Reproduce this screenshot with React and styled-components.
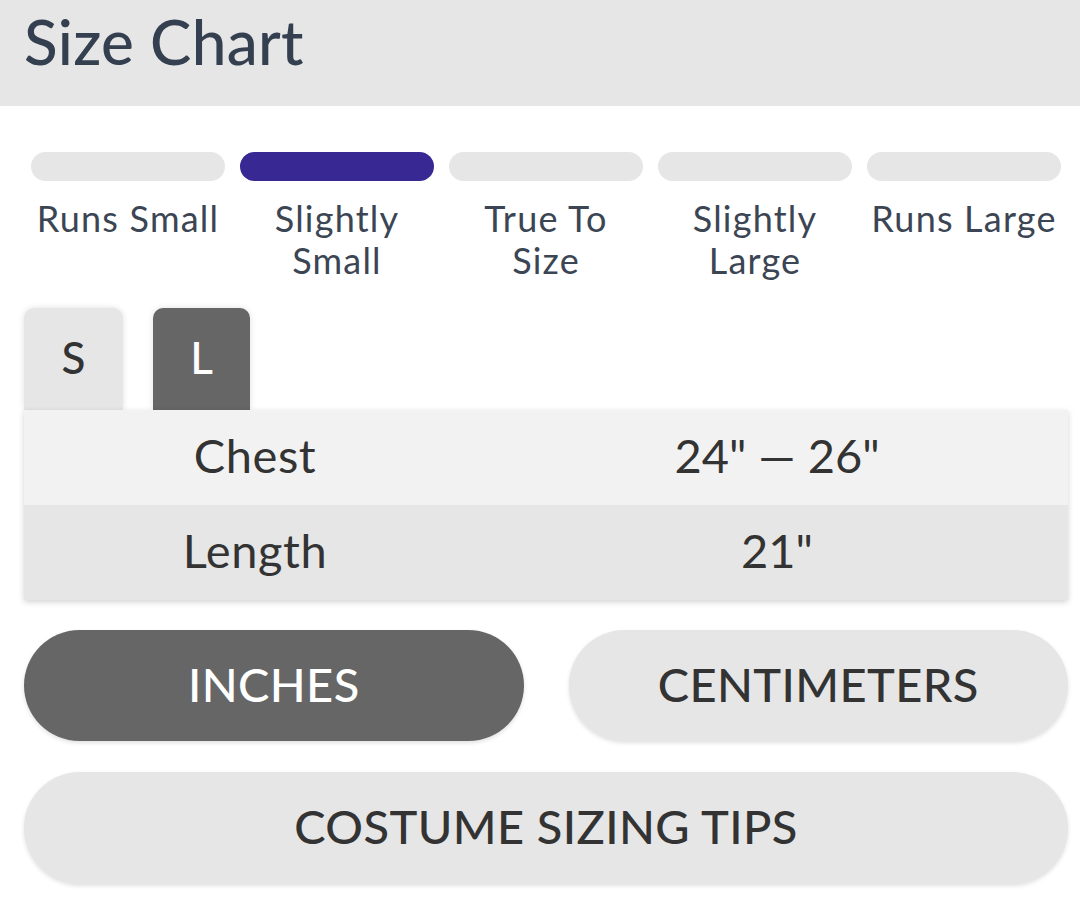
import React, { useState } from 'react';
import styled, { createGlobalStyle } from 'styled-components';

const GlobalStyle = createGlobalStyle`
  html, body {
    margin: 0;
    padding: 0;
    background: #ffffff;
    font-family: Lato, "Open Sans", sans-serif;
  }
`;

const FIT_SCALE = ['Runs Small', 'Slightly Small', 'True To Size', 'Slightly Large', 'Runs Large'];

const SIZES = {
  S: [
    { label: 'Chest', value: '20" — 22"' },
    { label: 'Length', value: '19"' },
  ],
  L: [
    { label: 'Chest', value: '24" — 26"' },
    { label: 'Length', value: '21"' },
  ],
};

const Page = styled.div`
  width: 1080px;
  height: 903px;
  overflow: hidden;
  background: #fff;
`;

const Header = styled.header`
  height: 106px;
  background: #e6e6e6;
  display: flex;
  align-items: center;
  padding: 0 24px;
  box-sizing: border-box;
`;

const Title = styled.h1`
  margin: 0 0 24px;
  font-size: 62px;
  font-weight: 500;
  color: #344050;
  letter-spacing: 0.3px;
`;

const Body = styled.div`
  padding: 46px 24px 0;
`;

const FitScale = styled.div`
  display: grid;
  grid-template-columns: repeat(5, 194px);
  gap: 15px;
  margin-left: 7px;
`;

const FitItem = styled.div`
  display: flex;
  flex-direction: column;
  align-items: center;
  gap: 16px;
`;

const FitBar = styled.div`
  width: 100%;
  height: 29px;
  border-radius: 15px;
  background: ${p => (p.$active ? '#382894' : '#e6e6e6')};
`;

const FitLabel = styled.div`
  font-size: 36px;
  line-height: 42px;
  letter-spacing: 1.2px;
  color: #3b4553;
  text-align: center;
  width: 100%;
`;

const Tabs = styled.div`
  display: flex;
  gap: 30px;
  margin-top: 27px;
`;

const Tab = styled.button`
  width: ${p => (p.$active ? '97px' : '99px')};
  height: 102px;
  border: none;
  border-radius: 10px 10px 0 0;
  background: ${p => (p.$active ? '#666666' : '#e6e6e6')};
  color: ${p => (p.$active ? '#ffffff' : '#333333')};
  font-family: Lato, sans-serif;
  font-size: 44px;
  font-weight: 500;
  box-shadow: 0 0 6px rgba(0, 0, 0, 0.12);
  padding: 0 0 4px;
  cursor: pointer;
`;

const Table = styled.div`
  width: 1044px;
  box-shadow: 0 2px 6px rgba(0, 0, 0, 0.18);
  position: relative;
`;

const Row = styled.div`
  display: grid;
  grid-template-columns: 462px 1fr;
  height: 95px;
  align-items: center;
  background: ${p => (p.$alt ? '#e6e6e6' : '#f2f2f2')};
`;

const Cell = styled.div`
  text-align: center;
  font-size: 47px;
  letter-spacing: 0.6px;
  color: #333;
  padding-bottom: 6px;
`;

const ValueCell = styled(Cell)`
  letter-spacing: 0;
`;

const UnitRow = styled.div`
  display: grid;
  grid-template-columns: 1fr 1fr;
  gap: 45px;
  margin-top: 30px;
  width: 1044px;
`;

const PillButton = styled.button`
  height: 111px;
  border: none;
  border-radius: 56px;
  background: ${p => (p.$active ? '#666666' : '#e6e6e6')};
  color: ${p => (p.$active ? '#ffffff' : '#333333')};
  font-family: Lato, sans-serif;
  font-size: 47px;
  font-weight: 500;
  text-transform: uppercase;
  letter-spacing: 0.4px;
  box-shadow: 0 2px 4px rgba(0, 0, 0, 0.12);
  cursor: pointer;
  width: 100%;
  padding: 0 0 4px;
`;

const TipsButton = styled(PillButton)`
  width: 1044px;
  margin-top: 31px;
  height: 112px;
`;

const App = () => {
  const [size, setSize] = useState('L');
  const [unit, setUnit] = useState('in');

  return (
    <Page>
      <GlobalStyle />
      <Header>
        <Title>Size Chart</Title>
      </Header>
      <Body>
        <FitScale>
          {FIT_SCALE.map((label, i) => (
            <FitItem key={label}>
              <FitBar $active={i === 1} />
              <FitLabel>{label}</FitLabel>
            </FitItem>
          ))}
        </FitScale>

        <Tabs>
          {Object.keys(SIZES).map(s => (
            <Tab key={s} $active={s === size} onClick={() => setSize(s)}>
              {s}
            </Tab>
          ))}
        </Tabs>
        <Table>
          {SIZES[size].map((row, i) => (
            <Row key={row.label} $alt={i % 2 === 1}>
              <Cell>{row.label}</Cell>
              <ValueCell>{row.value}</ValueCell>
            </Row>
          ))}
        </Table>

        <UnitRow>
          <PillButton $active={unit === 'in'} onClick={() => setUnit('in')}>Inches</PillButton>
          <PillButton $active={unit === 'cm'} onClick={() => setUnit('cm')}>Centimeters</PillButton>
        </UnitRow>
        <TipsButton>Costume Sizing Tips</TipsButton>
      </Body>
    </Page>
  );
};

export default App;
